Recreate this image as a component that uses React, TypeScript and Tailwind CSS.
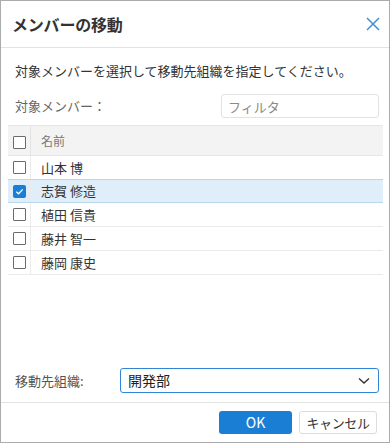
import { useState } from 'react';

const members = ['山本 博', '志賀 修造', '植田 信貴', '藤井 智一', '藤岡 康史'];

function Check({ checked }: { checked: boolean }) {
  if (checked) {
    return (
      <span className="flex h-[13px] w-[13px] items-center justify-center rounded-[2px] bg-[#1a7fd4]">
        <svg width="9" height="9" viewBox="0 0 10 10" fill="none">
          <path d="M1.5 5.2 4 7.5 8.6 2.6" stroke="#fff" strokeWidth="1.4" />
        </svg>
      </span>
    );
  }
  return <span className="block h-[13px] w-[13px] rounded-[1px] border border-[#6b6b6b] bg-white" />;
}

export default function App() {
  const [selected, setSelected] = useState<number[]>([1]);

  const toggle = (i: number) =>
    setSelected((s) => (s.includes(i) ? s.filter((x) => x !== i) : [...s, i]));

  return (
    <div
      className="flex h-[443px] w-[390px] flex-col border border-[#ababab] bg-white text-[#333]"
      style={{ fontFamily: '"Noto Sans CJK JP", "Noto Sans", sans-serif' }}
    >
      <div className="flex h-[47px] shrink-0 items-center justify-between border-b border-[#e3e3e3] pl-[11px] pr-[9px]">
        <h1 className="text-[16px] font-bold tracking-[-0.2px] text-[#333]">メンバーの移動</h1>
        <svg width="14" height="14" viewBox="0 0 14 14" fill="none">
          <path d="M1 1 13 13M13 1 1 13" stroke="#3d8fd8" strokeWidth="1.5" />
        </svg>
      </div>

      <div className="flex flex-1 flex-col px-[7px]">
        <p className="mt-[13px] pl-[7px] text-[13px] leading-[20px]">
          対象メンバーを選択して移動先組織を指定してください。
        </p>

        <div className="mt-[13px] flex items-center justify-between pr-[3px]">
          <span className="pl-[7px] text-[13px] text-[#666]">対象メンバー：</span>
          <input
            placeholder="フィルタ"
            className="h-[24px] w-[158px] rounded-[3px] border border-[#e2e2e2] px-[6px] text-[13px] text-[#333] outline-none placeholder:text-[#8a8a8a]"
          />
        </div>

        <div className="mt-[7px] mr-[-1px] border-t border-[#e6e6e6]">
          <div className="flex h-[30px] items-center border-b border-[#e6e6e6] bg-[#f3f3f3]">
            <div className="flex h-full w-[23px] items-center justify-center border-r border-[#e3e3e3] pt-[3px]">
              <Check checked={false} />
            </div>
            <span className="pl-[10px] text-[12px] text-[#777]">名前</span>
          </div>
          {members.map((m, i) => {
            const on = selected.includes(i);
            return (
              <div
                key={m}
                onClick={() => toggle(i)}
                className={
                  on
                    ? 'flex h-[24px] items-center border-b border-t border-[#b8d8f0] bg-[#e0eef9] -mt-px'
                    : 'flex h-[24px] items-center border-b border-[#ebebeb]'
                }
              >
                <div className="flex h-full w-[23px] items-center justify-center border-r border-[#ebebeb]">
                  <Check checked={on} />
                </div>
                <span className="pl-[10px] text-[13px] text-[#333]">{m}</span>
              </div>
            );
          })}
        </div>

        <div className="flex-1" />

        <div className="mb-[9px] flex items-center pr-[3px]">
          <span className="w-[112px] pl-[7px] text-[13px] text-[#555]">移動先組織:</span>
          <div className="flex h-[25px] flex-1 items-center justify-between rounded-[3px] border border-[#2f86d6] pl-[7px] pr-[8px]">
            <span className="text-[14px] text-[#222]">開発部</span>
            <svg width="12" height="8" viewBox="0 0 12 8" fill="none">
              <path d="M1 1.5 6 6 11 1.5" stroke="#333" strokeWidth="1.4" />
            </svg>
          </div>
        </div>
      </div>

      <div className="flex h-[40px] shrink-0 items-center justify-end gap-[7px] border-t border-[#e3e3e3] pr-[12px]">
        <button className="h-[23px] w-[73px] rounded-[3px] bg-[#1a7fd4] text-[14px] text-white">OK</button>
        <button className="h-[23px] w-[78px] rounded-[3px] border border-[#dcdcdc] bg-white text-[13px] tracking-[-0.4px] text-[#333]">
          キャンセル
        </button>
      </div>
    </div>
  );
}
